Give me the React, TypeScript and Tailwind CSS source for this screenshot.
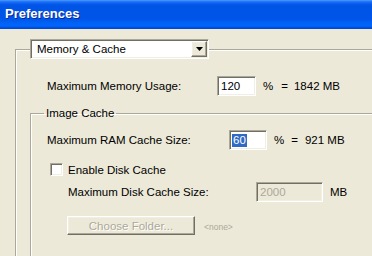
import React from "react";

const sunken =
  "border border-t-[#ACA899] border-l-[#ACA899] border-b-white border-r-white shadow-[inset_1px_1px_0_#716F64,inset_-1px_-1px_0_#F1EFE2]";
const raised =
  "border border-t-white border-l-white border-b-[#716F64] border-r-[#716F64] shadow-[inset_-1px_-1px_0_#ACA899,inset_1px_1px_0_#F1EFE2]";

export default function App() {
  return (
    <div className="w-[372px] h-[256px] overflow-hidden bg-[#ECE9D8] text-[11.5px] leading-[14px] text-black font-['Liberation_Sans',Arial,sans-serif]">
      <div className="h-[29px] flex items-center pl-[5px] pb-[1px] bg-[linear-gradient(to_bottom,#4a9cff_0px,#1a6cf8_2px,#0054e6_5px,#0055e8_19px,#0062f6_23px,#0066fa_26px,#0048d8_28px)]">
        <span className="text-[13px] font-bold text-white [text-shadow:1px_1px_0_#0a2a9a]">Preferences</span>
      </div>

      <fieldset className="ml-[15px] mt-[10px] w-[420px] h-[300px] border border-[#ACA899] shadow-[inset_1px_1px_0_#ffffff] pl-[14px]">
        <legend className="p-0 ml-0">
          <div className={`w-[179px] h-[20px] bg-white flex items-center ${sunken}`}>
            <span className="ml-[6px] flex-1">Memory &amp; Cache</span>
            <div className={`w-[16px] h-[16px] mr-[1px] bg-[#ECE9D8] flex items-center justify-center ${raised}`}>
              <svg width="7" height="4" viewBox="0 0 7 4">
                <path d="M0 0H7L3.5 4Z" fill="#000" />
              </svg>
            </div>
          </div>
        </legend>

        <div className="mt-[17px] h-[20px] flex items-center">
          <span className="ml-[17px] w-[170px]">Maximum Memory Usage:</span>
          <div className={`w-[39px] h-[20px] bg-white flex items-center pl-[3px] ${sunken}`}>120</div>
          <span className="ml-[7px]">%</span>
          <span className="ml-[8px]">=</span>
          <span className="ml-[6px]">1842 MB</span>
        </div>

        <fieldset className="mt-[10px] w-[400px] h-[200px] border border-[#ACA899] shadow-[inset_1px_1px_0_#ffffff] pl-[13px]">
          <legend className="px-[2px] h-[14px] leading-[14px]">Image Cache</legend>

          <div className="mt-[10px] h-[20px] flex items-center">
            <span className="ml-[3px] w-[182px]">Maximum RAM Cache Size:</span>
            <div className={`w-[38px] h-[20px] bg-white flex items-center pl-[2px] ${sunken}`}>
              <span className="bg-[#316AC5] text-white px-[1px] leading-[13px]">60</span>
            </div>
            <span className="ml-[7px]">%</span>
            <span className="ml-[7px]">=</span>
            <span className="ml-[7px]">921 MB</span>
          </div>

          <div className="mt-[13px] h-[13px] flex items-center">
            <div className={`ml-[6px] w-[13px] h-[13px] bg-white ${sunken}`} />
            <span className="ml-[5px]">Enable Disk Cache</span>
          </div>

          <div className="mt-[6px] h-[20px] flex items-center">
            <span className="ml-[24px] w-[188px]">Maximum Disk Cache Size:</span>
            <div className={`w-[67px] h-[20px] bg-[#ECE9D8] text-[#ACA899] flex items-center pl-[3px] ${sunken}`}>2000</div>
            <span className="ml-[7px]">MB</span>
          </div>

          <div className="mt-[14px] flex items-center">
            <div className={`ml-[23px] w-[128px] h-[19px] bg-[#ECE9D8] flex items-center justify-center text-[#ACA899] [text-shadow:1px_1px_0_#ffffff] ${raised}`}>
              Choose Folder...
            </div>
            <span className="ml-[9px] mt-[3px] text-[8.5px] text-[#ACA899]">&lt;none&gt;</span>
          </div>
        </fieldset>
      </fieldset>
    </div>
  );
}
